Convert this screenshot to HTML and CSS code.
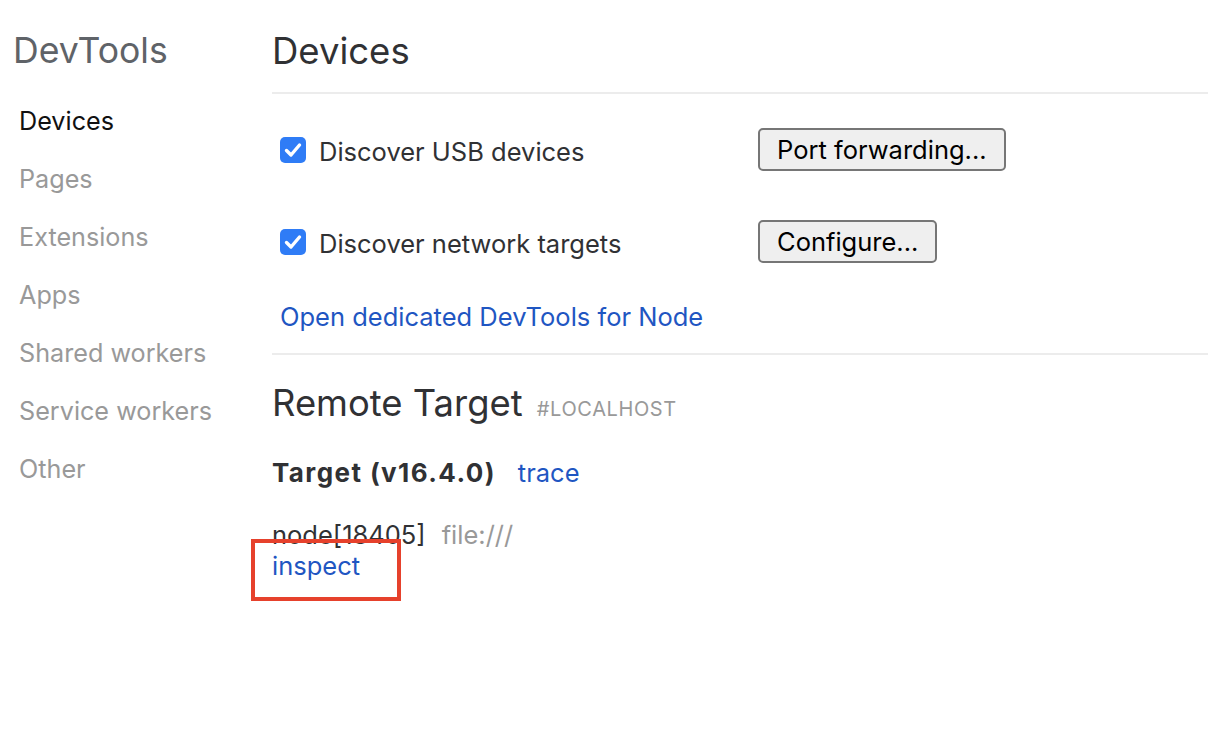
FILE: index.html
```html
<!DOCTYPE html>
<html>
<head>
<meta charset="utf-8">
<link rel="stylesheet" href="styles.css">
</head>
<body>
<div class="app">
  <nav class="sidebar">
    <div class="brand">DevTools</div>
    <ul class="nav">
      <li class="nav-item active">Devices</li>
      <li class="nav-item">Pages</li>
      <li class="nav-item">Extensions</li>
      <li class="nav-item">Apps</li>
      <li class="nav-item">Shared workers</li>
      <li class="nav-item">Service workers</li>
      <li class="nav-item">Other</li>
    </ul>
  </nav>
  <main class="main">
    <h1 class="title">Devices</h1>
    <div class="rule rule-top"></div>
    <div class="option-row first">
      <label class="check-label">
        <span class="checkbox"><svg viewBox="0 0 26 26" width="26" height="26"><path d="M6.5 13.5 L11 18 L19.5 8" fill="none" stroke="#fff" stroke-width="3.4" stroke-linecap="round" stroke-linejoin="round"/></svg></span>
        <span>Discover USB devices</span>
      </label>
      <button class="btn">Port forwarding...</button>
    </div>
    <div class="option-row second">
      <label class="check-label">
        <span class="checkbox"><svg viewBox="0 0 26 26" width="26" height="26"><path d="M6.5 13.5 L11 18 L19.5 8" fill="none" stroke="#fff" stroke-width="3.4" stroke-linecap="round" stroke-linejoin="round"/></svg></span>
        <span>Discover network targets</span>
      </label>
      <button class="btn">Configure...</button>
    </div>
    <a class="link node-link">Open dedicated DevTools for Node</a>
    <div class="rule rule-mid"></div>
    <h2 class="remote">Remote Target <span class="host">#LOCALHOST</span></h2>
    <div class="target"><span class="target-name">Target (v16.4.0)</span><a class="link trace">trace</a></div>
    <div class="target-item">
      <div class="item-line">node[18405]<span class="url">file:///</span></div>
      <div class="item-line"><a class="link">inspect</a></div>
      <div class="highlight"></div>
    </div>
  </main>
</div>
</body>
</html>
```
FILE: styles.css
```css
html, body {
  margin: 0;
  padding: 0;
  background: #fff;
}
body {
  font-family: Inter, "Noto Sans", "Liberation Sans", sans-serif;
  color: #303134;
}
.app {
  display: flex;
  width: 1208px;
  height: 738px;
  overflow: hidden;
}
.sidebar {
  width: 272px;
  flex: none;
}
.brand {
  margin-top: 29px;
  padding-left: 13px;
  font-size: 35.6px;
  line-height: 44px;
  color: #5f6368;
}
.nav {
  list-style: none;
  margin: 19px 0 0;
  padding: 0;
}
.nav-item {
  padding-left: 19px;
  font-size: 25.2px;
  line-height: 58px;
  color: #999;
}
.nav-item.active {
  color: #111;
}
.main {
  flex: 1;
  min-width: 0;
}
.title {
  margin: 29px 0 0;
  font-size: 36.5px;
  font-weight: 400;
  line-height: 44px;
  color: #303134;
}
.rule {
  height: 2px;
  background: #ececec;
}
.rule-top { margin-top: 19px; }
.rule-mid { margin-top: 21px; }
.option-row {
  display: flex;
  align-items: center;
  height: 43px;
  padding-left: 8px;
}
.option-row.first { margin-top: 34px; }
.option-row.second { margin-top: 49px; }
.check-label {
  display: flex;
  align-items: center;
  width: 478px;
  font-size: 25.5px;
  color: #303134;
  padding-top: 3px;
}
.checkbox {
  width: 26px;
  height: 26px;
  border-radius: 5px;
  background: #2f7cf6;
  margin-right: 13px;
  margin-top: -3px;
  display: flex;
}
.btn {
  box-sizing: border-box;
  height: 43px;
  padding: 0 17px;
  font-family: inherit;
  font-size: 25.5px;
  color: #000;
  background: #efefef;
  border: 2px solid #767676;
  border-radius: 5px;
}
.link {
  color: #1f56c2;
  font-size: 25.5px;
}
.node-link {
  display: block;
  margin-top: 39px;
  padding-left: 8px;
  line-height: 30px;
}
.remote {
  margin: 26px 0 0;
  font-size: 36.4px;
  font-weight: 400;
  line-height: 44px;
  color: #303134;
}
.host {
  margin-left: 4px;
  font-size: 20px;
  letter-spacing: 0.6px;
  color: #999;
}
.target {
  margin-top: 27px;
  line-height: 30px;
  font-size: 25.5px;
}
.target-name {
  font-weight: 700;
  font-size: 26px;
  letter-spacing: 1.4px;
  margin-right: 22px;
}
.target-item {
  position: relative;
  margin-top: 31px;
  font-size: 25.5px;
}
.item-line {
  line-height: 31px;
}
.url {
  margin-left: 16px;
  color: #999;
}
.highlight {
  position: absolute;
  left: -21px;
  top: 20px;
  width: 142px;
  height: 54px;
  border: 4px solid #e6412c;
}
```
